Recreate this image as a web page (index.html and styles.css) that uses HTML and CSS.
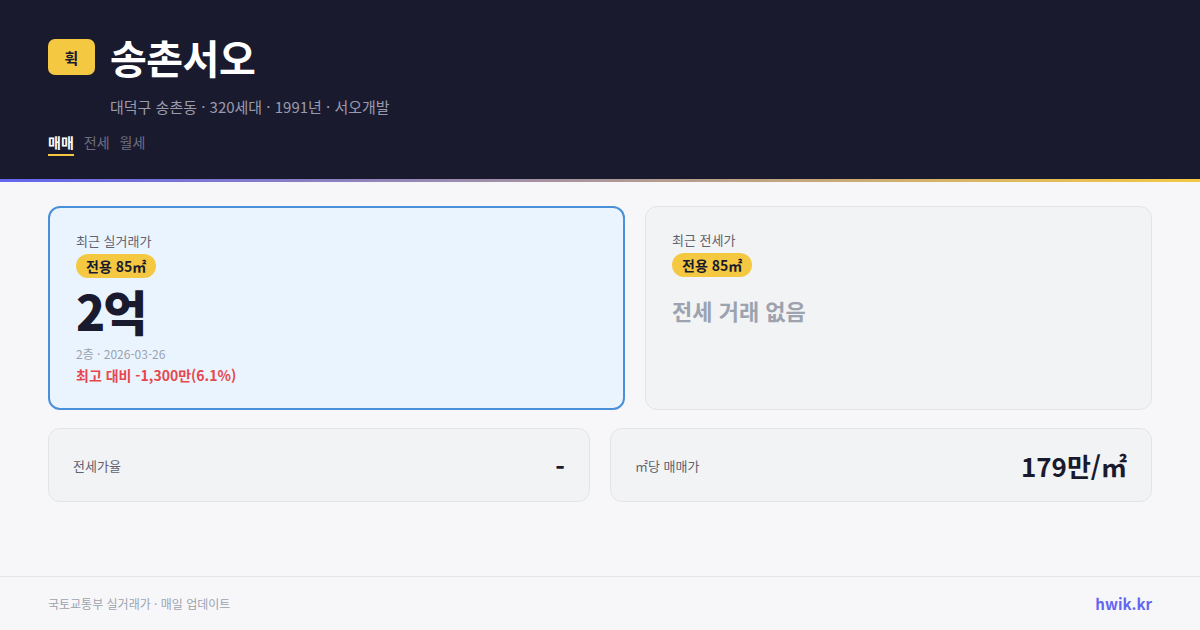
FILE: index.html
```html
<!DOCTYPE html>
<html lang="ko">
<head>
<meta charset="utf-8">
<link rel="stylesheet" href="styles.css">
</head>
<body>
<header class="hero">
  <div class="title-row">
    <div class="logo">휙</div>
    <h1 class="title">송촌서오</h1>
  </div>
  <p class="sub">대덕구 송촌동 · 320세대 · 1991년 · 서오개발</p>
  <nav class="tabs">
    <span class="tab active">매매</span>
    <span class="tab">전세</span>
    <span class="tab">월세</span>
  </nav>
</header>
<div class="accent"></div>
<main class="main">
  <div class="top-row">
    <section class="card card-sale">
      <div class="label">최근 실거래가</div>
      <span class="pill">전용 85㎡</span>
      <div class="price">2억</div>
      <div class="meta">2층 · 2026-03-26</div>
      <div class="diff">최고 대비 -1,300만(6.1%)</div>
    </section>
    <section class="card card-rent">
      <div class="label">최근 전세가</div>
      <span class="pill">전용 85㎡</span>
      <div class="empty">전세 거래 없음</div>
    </section>
  </div>
  <div class="bottom-row">
    <section class="stat">
      <span class="stat-label">전세가율</span>
      <span class="stat-value">-</span>
    </section>
    <section class="stat">
      <span class="stat-label">㎡당 매매가</span>
      <span class="stat-value">179만/㎡</span>
    </section>
  </div>
</main>
<footer class="footer">
  <span class="src">국토교통부 실거래가 · 매일 업데이트</span>
  <span class="brand">hwik.kr</span>
</footer>
</body>
</html>
```
FILE: styles.css
```css
* { box-sizing: border-box; }
html, body { margin: 0; padding: 0; }
body {
  width: 1200px;
  height: 630px;
  overflow: hidden;
  background: #f7f7f9;
  font-family: "Noto Sans CJK KR", "Noto Sans", sans-serif;
  color: #1a1a2e;
  display: flex;
  flex-direction: column;
}
.hero {
  background: #1a1a2e;
  height: 179px;
  padding: 34px 48px 0;
}
.title-row {
  display: flex;
  align-items: center;
  gap: 15px;
}
.logo {
  width: 47px;
  height: 36px;
  border-radius: 7px;
  background: #f5c842;
  color: #1a1a2e;
  font-weight: 700;
  font-size: 15px;
  display: flex;
  align-items: center;
  justify-content: center;
}
.title {
  margin: 0;
  color: #fff;
  font-size: 40px;
  font-weight: 700;
  line-height: 46px;
  letter-spacing: -0.5px;
}
.sub {
  margin: 17px 0 0 62px;
  color: #9a9aae;
  font-size: 15px;
  line-height: 20px;
}
.tabs {
  display: flex;
  gap: 10px;
  margin-top: 15px;
}
.tab {
  color: #6e6e82;
  font-size: 14px;
  line-height: 20px;
  padding-bottom: 2px;
}
.tab.active {
  color: #fff;
  font-weight: 700;
  border-bottom: 2px solid #f5c842;
}
.accent {
  height: 3px;
  background: linear-gradient(90deg, #6366f1, #f5c842);
}
.main {
  flex: 1;
  padding: 24px 48px 0;
}
.top-row {
  display: grid;
  grid-template-columns: 577fr 507fr;
  gap: 20px;
}
.card {
  height: 204px;
  border-radius: 12px;
  padding: 24px 26px;
  display: flex;
  flex-direction: column;
  align-items: flex-start;
}
.card-sale {
  background: #eaf4ff;
  border: 2px solid #4a90d9;
}
.card-rent {
  background: #f2f3f5;
  border: 1px solid #e3e4e8;
}
.label {
  color: #5f6270;
  font-size: 13px;
  line-height: 18px;
}
.pill {
  margin-top: 4px;
  background: #f5c842;
  color: #1a1a2e;
  font-size: 14px;
  font-weight: 700;
  line-height: 24px;
  padding: 0 10px;
  border-radius: 12px;
}
.price {
  font-size: 48px;
  font-weight: 900;
  line-height: 48px;
  margin-top: 8px;
  letter-spacing: -2px;
}
.meta {
  color: #9ca3af;
  font-size: 12px;
  line-height: 18px;
  margin-top: 11px;
}
.diff {
  color: #e5484d;
  font-size: 14px;
  font-weight: 700;
  line-height: 20px;
  margin-top: 2px;
}
.empty {
  margin-top: 17px;
  color: #9ca3af;
  font-size: 22px;
  font-weight: 700;
  line-height: 32px;
}
.bottom-row {
  display: grid;
  grid-template-columns: 1fr 1fr;
  gap: 20px;
  margin-top: 18px;
}
.stat {
  height: 74px;
  background: #f2f3f5;
  border: 1px solid #e3e4e8;
  border-radius: 12px;
  padding: 0 24px;
  display: flex;
  align-items: center;
  justify-content: space-between;
}
.stat-label {
  color: #5f6270;
  font-size: 13px;
}
.stat-value {
  font-size: 26px;
  font-weight: 700;
  color: #1a1a2e;
}
.footer {
  height: 54px;
  border-top: 1px solid #e3e4e8;
  padding: 0 48px;
  display: flex;
  align-items: center;
  justify-content: space-between;
}
.src {
  color: #9ca3af;
  font-size: 12px;
}
.brand {
  color: #6366f1;
  font-size: 15px;
  font-weight: 700;
}
```
